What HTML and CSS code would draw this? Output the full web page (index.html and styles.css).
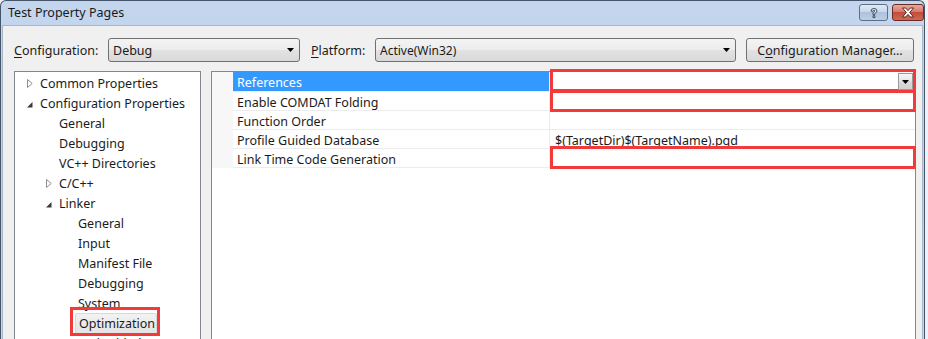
FILE: index.html
```html
<!DOCTYPE html>
<html>
  <head>
    <title>Test Property Pages</title>
    <meta charset="UTF-8">
    <link rel="stylesheet" href="styles.css">
  </head>
<body>

<div class="window">

  <!--Title bar-->
  <div class="titlebar">
    <span class="title">Test Property Pages</span>
    <div class="caption-buttons">
      <span class="cap-btn help">
        <svg width="12" height="12" viewBox="0 0 12 12"><path d="M3 4.2 Q3 1.5 6 1.5 Q9 1.5 9 4 Q9 5.5 6.8 6.4 L6.8 7.8 L5 7.8 L5 5.6 Q7 5 7 4 Q7 3.2 6 3.2 Q5 3.2 4.9 4.3 Z M5 8.8 H6.9 V10.6 H5 Z" fill="#fff" stroke="#2d3b4e" stroke-width="0.9"/></svg>
      </span>
      <span class="cap-btn close">
        <svg width="14" height="11" viewBox="0 0 14 11"><path d="M1.5 1 H4.7 L7 3.6 L9.3 1 H12.5 L8.7 5.5 L12.5 10 H9.3 L7 7.4 L4.7 10 H1.5 L5.3 5.5 Z" fill="#fff" stroke="#4a1b14" stroke-width="0.9"/></svg>
      </span>
    </div>
  </div>

  <div class="client">

    <!--Configuration / Platform-->
    <div class="config-row">
      <span class="cfg-label"><u>C</u>onfiguration:</span>
      <div class="combo combo-config">
        <span>Debug</span>
        <svg class="arrow" width="7" height="4" viewBox="0 0 7 4"><polygon points="0,0 7,0 3.5,4" fill="#000"/></svg>
      </div>
      <span class="plat-label"><u>P</u>latform:</span>
      <div class="combo combo-platform">
        <span>Active(Win32)</span>
        <svg class="arrow" width="7" height="4" viewBox="0 0 7 4"><polygon points="0,0 7,0 3.5,4" fill="#000"/></svg>
      </div>
      <button class="cfg-manager">C<u>o</u>nfiguration Manager...</button>
    </div>

    <div class="panes">

      <!--The tree-->
      <div class="tree">
        <div class="tree-item lvl-0"><span class="twisty"><svg width="6" height="9" viewBox="0 0 6 9"><polygon points="0.5,0.5 5.2,4.5 0.5,8.5" fill="#fff" stroke="#8f8f8f"/></svg></span>Common Properties</div>
        <div class="tree-item lvl-0"><span class="twisty"><svg width="6" height="9" viewBox="0 0 6 9"><polygon points="5.5,3 5.5,8.5 0,8.5" fill="#3a3a3a"/></svg></span>Configuration Properties</div>
        <div class="tree-item lvl-1"><span class="twisty"></span>General</div>
        <div class="tree-item lvl-1"><span class="twisty"></span>Debugging</div>
        <div class="tree-item lvl-1"><span class="twisty"></span>VC++ Directories</div>
        <div class="tree-item lvl-1"><span class="twisty"><svg width="6" height="9" viewBox="0 0 6 9"><polygon points="0.5,0.5 5.2,4.5 0.5,8.5" fill="#fff" stroke="#8f8f8f"/></svg></span>C/C++</div>
        <div class="tree-item lvl-1"><span class="twisty"><svg width="6" height="9" viewBox="0 0 6 9"><polygon points="5.5,3 5.5,8.5 0,8.5" fill="#3a3a3a"/></svg></span>Linker</div>
        <div class="tree-item lvl-2"><span class="twisty"></span>General</div>
        <div class="tree-item lvl-2"><span class="twisty"></span>Input</div>
        <div class="tree-item lvl-2"><span class="twisty"></span>Manifest File</div>
        <div class="tree-item lvl-2"><span class="twisty"></span>Debugging</div>
        <div class="tree-item lvl-2"><span class="twisty"></span>System</div>
        <div class="tree-item lvl-2"><span class="twisty"></span><span class="selected marked">Optimization</span></div>
        <div class="tree-item lvl-2"><span class="twisty"></span>Embedded IDL</div>
      </div>

      <!--Property grid-->
      <div class="grid">
        <div class="grid-row first">
          <span class="gutter"></span>
          <span class="name active">References</span>
          <span class="value marked">
            <span class="value-drop"><svg width="7" height="4" viewBox="0 0 7 4"><polygon points="0,0 7,0 3.5,4" fill="#000"/></svg></span>
          </span>
        </div>
        <div class="grid-row">
          <span class="gutter"></span>
          <span class="name">Enable COMDAT Folding</span>
          <span class="value marked"></span>
        </div>
        <div class="grid-row">
          <span class="gutter"></span>
          <span class="name">Function Order</span>
          <span class="value"></span>
        </div>
        <div class="grid-row">
          <span class="gutter"></span>
          <span class="name">Profile Guided Database</span>
          <span class="value">$(TargetDir)$(TargetName).pgd</span>
        </div>
        <div class="grid-row">
          <span class="gutter"></span>
          <span class="name">Link Time Code Generation</span>
          <span class="value marked"></span>
        </div>
      </div>

    </div>
  </div>
</div>

</body>
</html>
```

FILE: styles.css
```css
html, body {
  margin: 0;
  padding: 0;
  background-color: #eef2f7;
  font-family: "Noto Sans", Arial, sans-serif;
  font-size: 12.5px;
  color: #1b1b1b;
  overflow: hidden;
}

.window {
  width: 925px;
  height: 345px;
  box-sizing: border-box;
  border: 1px solid #44546a;
  border-bottom: none;
  border-radius: 6px 6px 0 0;
  background: linear-gradient(#c4d6ed, #bcd1ea 60%, #c7d8ee);
  overflow: hidden;
}

/**Title bar*/
.titlebar {
  height: 24px;
  display: flex;
  align-items: center;
  padding-left: 7px;
  padding-right: 0;
}

.title {
  flex: 1;
  color: #1a1a1a;
  margin-top: -1px;
}

.caption-buttons {
  display: flex;
  gap: 4px;
  align-self: flex-start;
  margin-top: 3px;
}

.cap-btn {
  height: 17px;
  box-sizing: border-box;
  border: 1px solid #5e6f86;
  border-radius: 3px;
  display: flex;
  align-items: center;
  justify-content: center;
}

.help {
  width: 29px;
  background: linear-gradient(#e1eaf5, #c8d7ea 45%, #adc2dc 50%, #bccfe6);
}

.close {
  width: 32px;
  border-color: #6b2a22;
  background: linear-gradient(#e9a99c, #d7796a 45%, #c44c3b 50%, #cf6a55);
}

/**Client area*/
.client {
  background-color: #f0f0f0;
  height: 320px;
  margin: 0 1px;
  box-shadow: inset 1px 0 #a9b6c6, inset -1px 0 #a9b6c6, inset 0 1px #a9b6c6;
  padding: 13px 0 0 12px;
}

.config-row {
  display: flex;
  align-items: center;
  height: 24px;
}

.cfg-label {
  width: 94px;
}

.plat-label {
  width: 64px;
  margin-left: 11px;
}

.combo {
  height: 24px;
  box-sizing: border-box;
  border: 1px solid #707070;
  border-radius: 3px;
  background: linear-gradient(#f4f4f4, #ececec 50%, #e2e2e2 50%, #d9d9d9);
  display: flex;
  align-items: center;
  padding: 0 4px 0 4px;
}

.combo span {
  flex: 1;
}

.combo .arrow {
  margin-right: 1px;
}

.combo-config {
  width: 192px;
}

.combo-platform {
  width: 361px;
  font-size: 12px;
}

.cfg-manager {
  width: 168px;
  height: 24px;
  margin-left: 10px;
  border: 1px solid #707070;
  border-radius: 3px;
  background: linear-gradient(#f4f4f4, #ececec 50%, #e2e2e2 50%, #d9d9d9);
  font-family: inherit;
  font-size: inherit;
  color: inherit;
  padding: 0;
}

u {
  text-decoration-thickness: 1px;
  text-underline-offset: 2px;
}

/**Panes*/
.panes {
  display: flex;
  gap: 10px;
  margin-top: 9px;
}

.tree {
  width: 187px;
  height: 280px;
  box-sizing: border-box;
  border: 1px solid #828790;
  background-color: #fff;
  padding-top: 1px;
}

.tree-item {
  height: 20px;
  display: flex;
  align-items: center;
  white-space: nowrap;
}

.lvl-0 { padding-left: 11px; }
.lvl-1 { padding-left: 30px; }
.lvl-2 { padding-left: 49px; }

.twisty {
  width: 14px;
  display: flex;
  align-items: center;
  padding-left: 1px;
  box-sizing: border-box;
}

.selected {
  margin-left: -3px;
  padding: 1px 1px 1px 3px;
  background: linear-gradient(#f2f2f2, #e4e4e4);
  border: 1px solid #d9d9d9;
  border-radius: 2px;
}

.marked {
  position: relative;
}

.marked::after {
  content: "";
  position: absolute;
  top: -3px;
  bottom: -2px;
  left: 0;
  right: -1px;
  border: 3px solid #f23a3a;
}

.selected.marked::after {
  top: -7px;
  bottom: -3px;
  left: -6px;
  right: -4px;
}

.grid {
  width: 705px;
  height: 280px;
  box-sizing: border-box;
  border: 1px solid #828790;
  background-color: #fff;
}

.grid-row {
  display: flex;
  height: 19px;
}

.grid-row.first {
  height: 20px;
}

.gutter {
  width: 21px;
  background-color: #f7f7f7;
}

.name, .value {
  box-sizing: border-box;
  border-bottom: 1px solid #ececec;
  display: flex;
  align-items: center;
  white-space: nowrap;
  padding-top: 2px;
}

.name {
  width: 316px;
  padding-left: 4px;
}

.name.active {
  background-color: #3399ff;
  color: #fff;
}

.value {
  width: 366px;
  border-left: 1px solid #ececec;
  padding-left: 5px;
  justify-content: space-between;
}

.value-drop {
  margin-left: auto;
  margin-right: 2px;
  margin-top: -2px;
  width: 15px;
  height: 17px;
  box-sizing: border-box;
  border: 1px solid #9a9a9a;
  background: linear-gradient(#f6f6f6, #e6e6e6 50%, #dadada 50%, #d2d2d2);
  display: flex;
  align-items: center;
  justify-content: center;
  position: relative;
  z-index: 1;
}
```
